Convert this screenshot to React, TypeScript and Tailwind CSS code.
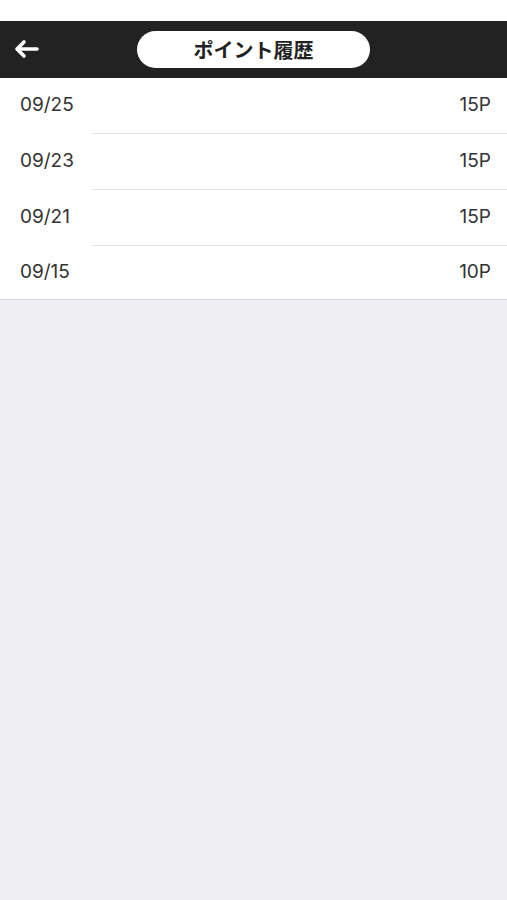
const rows = [
  { date: '09/25', point: '15P' },
  { date: '09/23', point: '15P' },
  { date: '09/21', point: '15P' },
  { date: '09/15', point: '10P' },
];

const BackArrow = () => (
  <svg width="26" height="20" viewBox="0 0 26 20" fill="none">
    <path d="M24 10H4M11 3L4 10l7 7" stroke="white" strokeWidth="3.6" strokeLinecap="round" strokeLinejoin="round" />
  </svg>
);

export default function App() {
  return (
    <div className="min-h-[900px] bg-[#efeff4] font-['Inter','Noto_Sans_CJK_JP',sans-serif]">
      <div className="h-[21px] bg-white" />
      <header className="relative flex h-[57px] items-center justify-center bg-[#222222]">
        <button className="absolute left-[13px] top-[18px]">
          <BackArrow />
        </button>
        <div className="flex h-[37px] w-[233px] items-center justify-center rounded-full bg-white text-[20px] font-bold text-[#222222] font-['Noto_Sans_CJK_JP',sans-serif]">
          ポイント履歴
        </div>
      </header>
      <ul className="border-b border-[#d9d9de] bg-white">
        {rows.map((row, i) => (
          <li key={row.date}>
            <div
              className={
                'flex items-center justify-between pl-[20px] pr-[16px] text-[19px] text-[#333333] ' +
                (i < rows.length - 1 ? 'h-[55px]' : 'h-[53px]')
              }
            >
              <span>{row.date}</span>
              <span>{row.point}</span>
            </div>
            {i < rows.length - 1 && <div className="ml-[92px] h-px bg-[#e2e2e2]" />}
          </li>
        ))}
      </ul>
    </div>
  );
}
